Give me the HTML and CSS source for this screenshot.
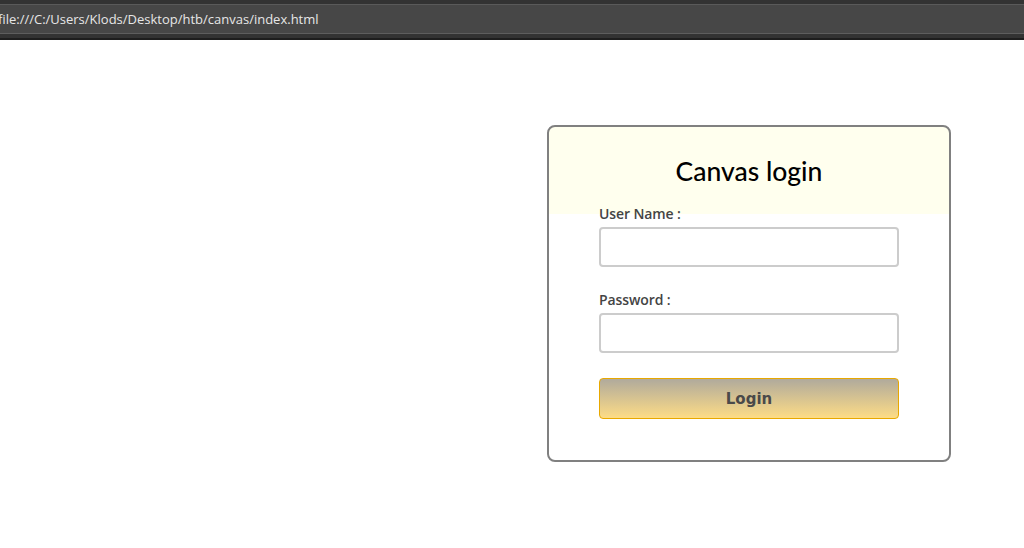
FILE: index.html
```html
<!DOCTYPE html>
<html>
<head>
<meta charset="utf-8">
<link rel="stylesheet" href="styles.css">
</head>
<body>
<div class="chrome">
  <div class="urlbar"><span class="url">file:///C:/Users/Klods/Desktop/htb/canvas/index.html</span></div>
</div>
<main class="page">
  <form class="card">
    <h1 class="title">Canvas login</h1>
    <label class="label" for="u">User Name :</label>
    <input class="field" id="u" type="text">
    <label class="label label-pw" for="p">Password :</label>
    <input class="field" id="p" type="password">
    <button class="btn" type="button">Login</button>
  </form>
</main>
</body>
</html>
```
FILE: styles.css
```css
html, body {
  margin: 0;
  padding: 0;
  background: #fff;
}
.chrome {
  height: 40px;
  box-sizing: border-box;
  background: #333;
  padding-top: 4px;
  border-bottom: 2px solid #1e1e1e;
}
.urlbar {
  height: 30px;
  box-sizing: border-box;
  background: #474747;
  border-top: 1px solid #5a5a5a;
  border-bottom: 1px solid #5e5e5e;
  display: flex;
  align-items: center;
}
.url {
  font-family: "Open Sans", "Noto Sans", sans-serif;
  font-size: 13px;
  color: #e6e6e6;
  margin-left: -2px;
}
.page {
  display: flex;
  justify-content: flex-end;
  padding: 85px 73px 0 0;
}
.card {
  width: 404px;
  height: 337px;
  box-sizing: border-box;
  border: 2px solid #808080;
  border-radius: 8px;
  padding: 30px 50px 0 50px;
  display: flex;
  flex-direction: column;
  background: linear-gradient(to bottom, #ffffee 0, #ffffee 87px, #fff 87px);
}
.title {
  margin: 0 0 20px;
  font-family: "Lato", "Noto Sans", sans-serif;
  font-weight: 500;
  font-size: 26.5px;
  line-height: 28px;
  color: #000;
  text-align: center;
}
.label {
  font-family: "Open Sans", "Noto Sans", sans-serif;
  font-weight: 600;
  font-size: 14px;
  line-height: 17px;
  color: #444;
  margin: 0 0 5px 0;
  letter-spacing: -0.1px;
}
.label-pw {
  margin-top: 24px;
  margin-bottom: 5px;
}
.field {
  width: 300px;
  height: 40px;
  box-sizing: border-box;
  border: 2px solid #cccccc;
  border-radius: 4px;
  margin: 0;
  padding: 0 8px;
  background: #fff;
}
.btn {
  margin-top: 25px;
  width: 300px;
  height: 41px;
  box-sizing: border-box;
  border: 1px solid #e8a800;
  border-radius: 4px;
  background: linear-gradient(to bottom, #b0aa9c 0%, #fddc86 100%);
  font-family: "DejaVu Sans", Verdana, sans-serif;
  font-weight: bold;
  font-size: 15px;
  color: #4a4a4a;
  padding: 0;
}
```
